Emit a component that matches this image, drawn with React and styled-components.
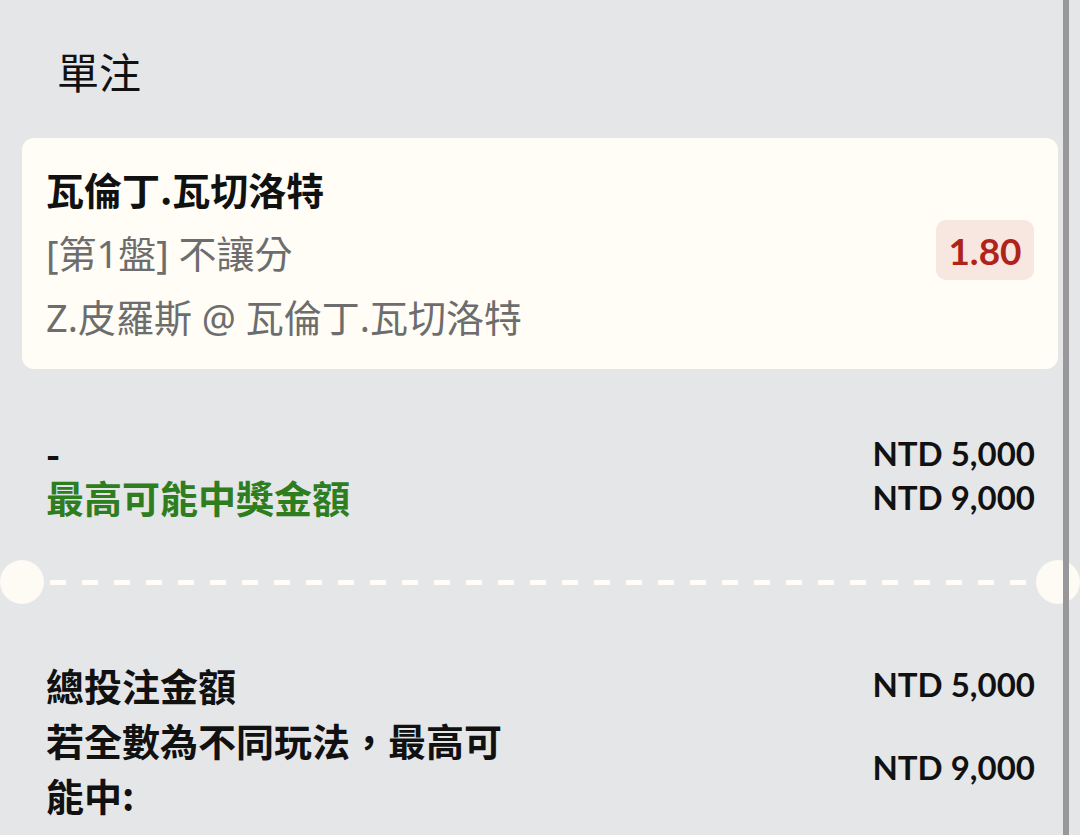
import React from 'react';
import styled, { createGlobalStyle } from 'styled-components';

const GlobalStyle = createGlobalStyle`
  html, body {
    margin: 0;
    padding: 0;
    background: #e5e6e8;
  }
  body {
    font-family: "Noto Sans CJK TC", "Noto Sans", sans-serif;
    color: #111;
  }
`;

const Page = styled.div`
  position: relative;
  min-height: 835px;
  padding-top: 41px;
  box-sizing: border-box;
  overflow: hidden;
`;

const ScrollEdge = styled.div`
  position: absolute;
  top: 0;
  bottom: 0;
  right: 11px;
  width: 6px;
  background: #98989b;
`;

const Title = styled.h1`
  margin: 0 0 0 57px;
  font-size: 42px;
  line-height: 60px;
  font-weight: 400;
`;

const BetCard = styled.div`
  margin: 37px 22px 0;
  padding: 19px 24px 20px;
  background: #fffdf5;
  border-radius: 12px;
  display: flex;
  align-items: center;
  justify-content: space-between;
`;

const BetInfo = styled.div`
  display: flex;
  flex-direction: column;
`;

const BetLine = styled.div`
  font-family: ${(p) =>
    p.$strong
      ? '"Noto Sans CJK TC", sans-serif'
      : '"Noto Sans", "Noto Sans CJK TC", sans-serif'};
  font-size: 38px;
  line-height: 64px;
  font-weight: ${(p) => (p.$strong ? 700 : 400)};
  color: ${(p) => (p.$strong ? '#111' : '#6d6d6d')};
  white-space: nowrap;
`;

const OddsBadge = styled.div`
  width: 98px;
  height: 60px;
  margin-bottom: 6px;
  border-radius: 10px;
  background: #f8e7e0;
  color: #b0231b;
  font-family: Lato, "Noto Sans", sans-serif;
  font-weight: 700;
  font-size: 37px;
  display: flex;
  align-items: center;
  justify-content: center;
`;

const Summary = styled.div`
  margin: ${(p) => p.$top}px 45px 0 46px;
  display: flex;
  flex-direction: column;
`;

const Row = styled.div`
  display: flex;
  align-items: center;
  justify-content: space-between;
  min-height: ${(p) => p.$lh}px;
`;

const Label = styled.div`
  max-width: 480px;
  font-size: 38px;
  line-height: ${(p) => p.$lh}px;
  font-weight: 700;
  color: ${(p) => (p.$green ? '#2e7d1f' : '#111')};
`;

const Amount = styled.div`
  font-family: Lato, "Noto Sans", sans-serif;
  font-weight: 700;
  font-size: 33px;
  line-height: ${(p) => p.$lh}px;
  color: #111;
  white-space: nowrap;
`;

const Divider = styled.div`
  position: relative;
  height: 44px;
  margin-top: 41px;
  display: flex;
  align-items: center;
  padding: 0 50px;
`;

const DashLine = styled.div`
  flex: 1;
  height: 5px;
  background: repeating-linear-gradient(
    to right,
    #fffdf5 0,
    #fffdf5 16px,
    transparent 16px,
    transparent 32px
  );
`;

const Notch = styled.div`
  position: absolute;
  top: 0;
  width: 44px;
  height: 44px;
  border-radius: 50%;
  background: #fffdf5;
  opacity: 0.9;
  ${(p) => (p.$side === 'left' ? 'left: 0;' : 'right: 0;')}
`;

export default function App() {
  return (
    <>
      <GlobalStyle />
      <Page>
        <Title>單注</Title>
        <BetCard>
          <BetInfo>
            <BetLine $strong>瓦倫丁.瓦切洛特</BetLine>
            <BetLine>[第1盤] 不讓分</BetLine>
            <BetLine>Z.皮羅斯 @ 瓦倫丁.瓦切洛特</BetLine>
          </BetInfo>
          <OddsBadge>1.80</OddsBadge>
        </BetCard>

        <Summary $top={62}>
          <Row $lh={44}>
            <Label $lh={44}>-</Label>
            <Amount $lh={44}>NTD 5,000</Amount>
          </Row>
          <Row $lh={44}>
            <Label $lh={44} $green>最高可能中獎金額</Label>
            <Amount $lh={44}>NTD 9,000</Amount>
          </Row>
        </Summary>

        <Divider>
          <Notch $side="left" />
          <DashLine />
          <Notch $side="right" />
        </Divider>

        <Summary $top={53}>
          <Row $lh={55}>
            <Label $lh={55}>總投注金額</Label>
            <Amount $lh={55}>NTD 5,000</Amount>
          </Row>
          <Row $lh={55}>
            <Label $lh={55}>若全數為不同玩法，最高可能中:</Label>
            <Amount $lh={55}>NTD 9,000</Amount>
          </Row>
        </Summary>
        <ScrollEdge />
      </Page>
    </>
  );
}
